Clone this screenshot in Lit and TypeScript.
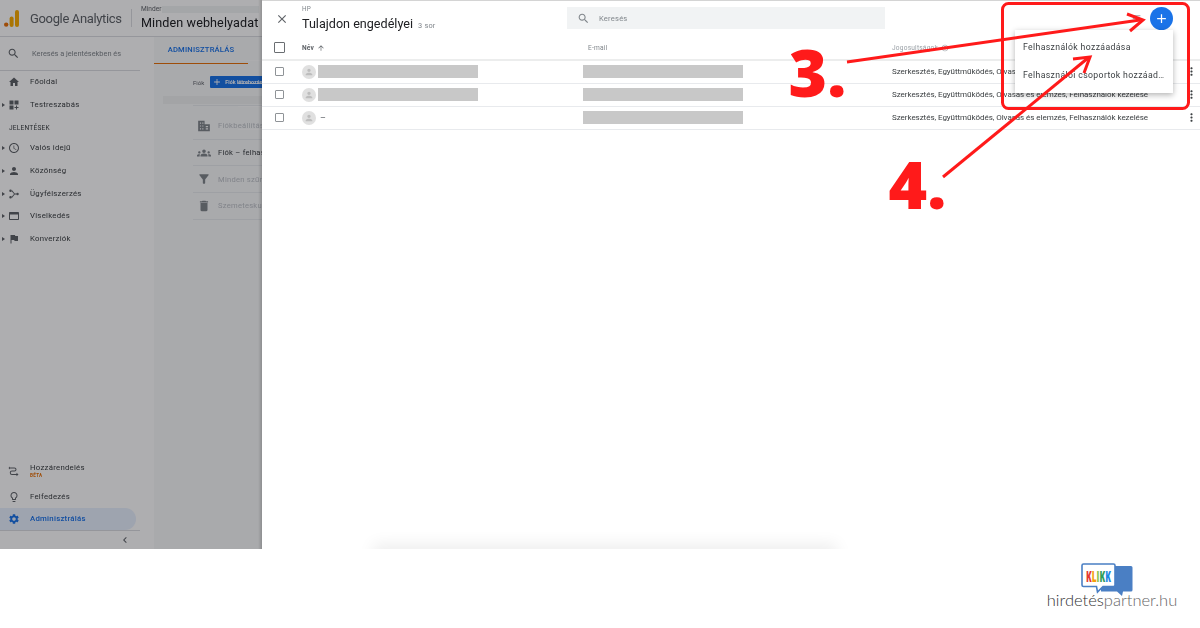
import { LitElement, html, css, svg } from "lit";
import { customElement } from "lit/decorators.js";

const I: Record<string, string> = {
  home: "M10 20v-6h4v6h5v-8h3L12 3 2 12h3v8z",
  dash: "M3 3h8v8H3zm10 0h8v8h-8zM3 13h8v8H3zm15 0h-2v3h-3v2h3v3h2v-3h3v-2h-3z",
  clock: "M12.5 7H11v6l5.25 3.15.75-1.23-4.5-2.67zM11.99 2C6.47 2 2 6.48 2 12s4.47 10 9.99 10C17.52 22 22 17.52 22 12S17.52 2 11.99 2zM12 20c-4.42 0-8-3.58-8-8s3.58-8 8-8 8 3.58 8 8-3.58 8-8 8z",
  person: "M12 12c2.21 0 4-1.79 4-4s-1.79-4-4-4-4 1.79-4 4 1.79 4 4 4zm0 2c-2.67 0-8 1.34-8 4v2h16v-2c0-2.66-5.33-4-8-4z",
  acq: "M5 3a2.5 2.5 0 1 0 0 5 2.5 2.5 0 0 0 0-5zm0 13a2.5 2.5 0 1 0 0 5 2.5 2.5 0 0 0 0-5zm14-6.5a2.5 2.5 0 1 0 0 5 2.5 2.5 0 0 0 0-5zM7 6l1.2-1.4 5.3 6.4H17v2h-3.5l-5.3 6.4L7 18l5-6z",
  web: "M20 4H4c-1.1 0-2 .9-2 2v12c0 1.1.9 2 2 2h16c1.1 0 2-.9 2-2V6c0-1.1-.9-2-2-2zm0 14H4V9h16z",
  flag: "M14.4 6L14 4H5v17h2v-7h5.6l.4 2h7V6z",
  search: "M15.5 14h-.79l-.28-.27C15.41 12.59 16 11.11 16 9.5 16 5.91 13.09 3 9.5 3S3 5.91 3 9.5 5.91 16 9.5 16c1.61 0 3.09-.59 4.23-1.57l.27.28v.79l5 4.99L20.49 19l-4.99-5zm-6 0C7.01 14 5 11.99 5 9.5S7.01 5 9.5 5 14 7.01 14 9.5 11.99 14 9.5 14z",
  gear: "M19.14 12.94c.04-.3.06-.61.06-.94 0-.32-.02-.64-.07-.94l2.03-1.58c.18-.14.23-.41.12-.61l-1.92-3.32c-.12-.22-.37-.29-.59-.22l-2.39.96c-.5-.38-1.03-.7-1.62-.94l-.36-2.54c-.04-.24-.24-.41-.48-.41h-3.84c-.24 0-.43.17-.47.41l-.36 2.54c-.59.24-1.13.57-1.62.94l-2.39-.96c-.22-.08-.47 0-.59.22L2.74 8.87c-.12.21-.08.47.12.61l2.03 1.58c-.05.3-.09.63-.09.94s.02.64.07.94l-2.03 1.58c-.18.14-.23.41-.12.61l1.92 3.32c.12.22.37.29.59.22l2.39-.96c.5.38 1.03.7 1.62.94l.36 2.54c.05.24.24.41.48.41h3.84c.24 0 .44-.17.47-.41l.36-2.54c.59-.24 1.13-.56 1.62-.94l2.39.96c.22.08.47 0 .59-.22l1.92-3.32c.12-.22.07-.47-.12-.61l-2.01-1.58zM12 15.6c-1.98 0-3.6-1.62-3.6-3.6s1.62-3.6 3.6-3.6 3.6 1.62 3.6 3.6-1.62 3.6-3.6 3.6z",
  bulb: "M9 21c0 .55.45 1 1 1h4c.55 0 1-.45 1-1v-1H9v1zm3-19C8.14 2 5 5.14 5 9c0 2.38 1.19 4.47 3 5.74V17c0 .55.45 1 1 1h6c.55 0 1-.45 1-1v-2.26c1.81-1.27 3-3.36 3-5.74 0-3.86-3.14-7-7-7zm2.85 11.1l-.85.6V16h-4v-2.3l-.85-.6C7.8 12.16 7 10.63 7 9c0-2.76 2.24-5 5-5s5 2.24 5 5c0 1.63-.8 3.16-2.15 4.1z",
  attr: "M4 3h9a4 4 0 0 1 0 8H8a2.5 2.5 0 0 0 0 5h9v-2.5l4 3.5-4 3.5V18H8a4.5 4.5 0 0 1 0-9h5a2 2 0 0 0 0-4H4v2L1 4l3-3z",
  trash: "M6 19c0 1.1.9 2 2 2h8c1.1 0 2-.9 2-2V7H6v12zM19 4h-3.5l-1-1h-5l-1 1H5v2h14V4z",
  filter: "M4.25 5.61C6.27 8.2 10 13 10 13v6c0 .55.45 1 1 1h2c.55 0 1-.45 1-1v-6s3.72-4.8 5.74-7.39c.51-.66.04-1.61-.79-1.61H5.04c-.83 0-1.3.95-.79 1.61z",
  biz: "M2 3h11v6h9v12H2zM5 6v2h2V6zm4 0v2h2V6zM5 11v2h2v-2zm4 0v2h2v-2zM5 16v2h2v-2zm4 0v2h2v-2zM15 12v2h4v-2zm0 4v2h4v-2z",
  group: "M12 12.75c1.63 0 3.07.39 4.24.9 1.08.48 1.76 1.56 1.76 2.73V18H6v-1.61c0-1.18.68-2.26 1.76-2.73 1.17-.52 2.61-.91 4.24-.91zM4 13c1.1 0 2-.9 2-2s-.9-2-2-2-2 .9-2 2 .9 2 2 2zm1.13 1.1c-.37-.06-.74-.1-1.13-.1-.99 0-1.93.21-2.78.58C.48 14.9 0 15.62 0 16.43V18h4.5v-1.61c0-.83.23-1.61.63-2.29zM20 13c1.1 0 2-.9 2-2s-.9-2-2-2-2 .9-2 2 .9 2 2 2zm4 3.43c0-.81-.48-1.53-1.22-1.85-.85-.37-1.79-.58-2.78-.58-.39 0-.76.04-1.13.1.4.68.63 1.46.63 2.29V18H24v-1.57zM12 6c1.66 0 3 1.34 3 3s-1.34 3-3 3-3-1.34-3-3 1.34-3 3-3z",
  close: "M19 6.41L17.59 5 12 10.59 6.41 5 5 6.41 10.59 12 5 17.59 6.41 19 12 13.41 17.59 19 19 17.59 13.41 12z",
  add: "M19 13h-6v6h-2v-6H5v-2h6V5h2v6h6z",
  up: "M4 12l1.41 1.41L11 7.83V20h2V7.83l5.58 5.59L20 12l-8-8-8 8z",
  more: "M12 8c1.1 0 2-.9 2-2s-.9-2-2-2-2 .9-2 2 .9 2 2 2zm0 2c-1.1 0-2 .9-2 2s.9 2 2 2 2-.9 2-2-.9-2-2-2zm0 6c-1.1 0-2 .9-2 2s.9 2 2 2 2-.9 2-2-.9-2-2-2z",
  help: "M11 18h2v-2h-2v2zm1-16C6.48 2 2 6.48 2 12s4.48 10 10 10 10-4.48 10-10S17.52 2 12 2zm0 18c-4.41 0-8-3.59-8-8s3.59-8 8-8 8 3.59 8 8-3.59 8-8 8zm0-14c-2.21 0-4 1.79-4 4h2c0-1.1.9-2 2-2s2 .9 2 2c0 2-3 1.75-3 5h2c0-2.25 3-2.5 3-5 0-2.21-1.79-4-4-4z",
  chev: "M15.41 7.41L14 6l-6 6 6 6 1.41-1.41L10.83 12z",
  filt2: "M3 6h18v2H3zm4 5h10v2H7zm3 5h4v2h-4z",
};
const ic = (n: string, s: number, c = "#5f6368") =>
  html`<svg class="i" width=${s} height=${s} viewBox="0 0 24 24" fill=${c} fill-rule="evenodd">${svg`<path d=${I[n]}></path>`}</svg>`;

const navTop = [
  ["home", "Főoldal", false],
  ["dash", "Testreszabás", true],
];
const navRep = [
  ["clock", "Valós idejű"],
  ["person", "Közönség"],
  ["acq", "Ügyfélszerzés"],
  ["web", "Viselkedés"],
  ["flag", "Konverziók"],
];
const adminRows = [
  ["biz", "Fiókbeállítások", true],
  ["group", "Fiók – felhasználók", false],
  ["filter", "Minden szűrő", true],
  ["trash", "Szemeteskuka", true],
];
const PERM = "Szerkesztés, Együttműködés, Olvasás és elemzés, Felhasználók kezelése";

@customElement("app-root")
export class AppRoot extends LitElement {
  static styles = css`
    :host { display: block; width: 1200px; height: 628px; position: relative; overflow: hidden; background: #fff; font-family: Roboto, "Liberation Sans", sans-serif; color: #3c4043; }
    .i { display: block; flex: none; }
    .stage { display: grid; grid-template-columns: 262px 1fr; height: 549px; filter: blur(0.45px); }
    .ga { position: relative; display: flex; flex-direction: column; height: 549px; overflow: hidden; background: #fff; }
    .scrim { position: absolute; inset: 0; background: rgba(2, 4, 8, 0.32); }
    .edge { position: absolute; top: 0; right: 0; bottom: 0; width: 4px; background: linear-gradient(90deg, transparent, rgba(0,0,0,.16)); }
    .ghost { position: absolute; left: 238px; top: 60px; width: 24px; height: 70px; background: repeating-linear-gradient(180deg, #fff 0 1px, transparent 1px 23px); opacity: .6; }
    .gahead { height: 37px; flex: none; display: flex; align-items: center; border-bottom: 1px solid #dadce0; box-sizing: border-box; white-space: nowrap; }
    .logo { width: 15px; height: 17px; margin-left: 4px; flex: none; }
    .gaName { font-size: 13px; letter-spacing: -.35px; color: #5f6368; margin-left: 11px; width: 101px; flex: none; }
    .gaDiv { width: 1px; height: 18px; background: #dadce0; flex: none; }
    .scope { margin-left: 9px; line-height: 1; flex: 1; min-width: 0; }
    .scope small { display: flex; align-items: center; gap: 1px; font-size: 6.6px; color: #5f6368; margin-bottom: 4px; height: 7px; }
    .scope small i { flex: 1; height: 7px; background: #f1f3f4; margin-right: 3px; }
    .scope b { display: block; font-weight: 400; font-size: 12.6px; color: #202124; letter-spacing: .1px; white-space: nowrap; }
    .gabody { display: grid; grid-template-columns: 154px 1fr; flex: 1; min-height: 0; }
    .nav { display: flex; flex-direction: column; min-width: 0; }
    .search { height: 34px; width: 140px; flex: none; box-sizing: border-box; border-bottom: 1px solid #dadce0; display: flex; align-items: center; padding-left: 7px; gap: 12px; font-size: 7.4px; color: #80868b; white-space: nowrap; overflow: hidden; }
    .row { height: 22.67px; flex: none; display: grid; grid-template-columns: 8px 14px 1fr; align-items: center; font-size: 7.8px; letter-spacing: .25px; color: #3c4043; width: 136px; box-sizing: border-box; }
    .row .t { padding-left: 8px; white-space: nowrap; line-height: 1; }
    .caret { width: 0; height: 0; border-left: 3px solid #5f6368; border-top: 2.5px solid transparent; border-bottom: 2.5px solid transparent; margin-left: 2px; }
    .sec { height: 20.67px; flex: none; display: flex; align-items: center; padding: 3px 0 0 9px; box-sizing: border-box; font-size: 6.6px; letter-spacing: .2px; color: #3c4043; }
    .grow { flex: 1; }
    .beta { display: block; font-size: 4.6px; line-height: 5px; font-weight: 700; color: #e8710a; letter-spacing: .3px; margin-top: 1px; }
    .row.hoz { height: 27px; }
    .row.hoz .t { transform: translateY(-1px); }
    .row.active { color: #1a73e8; background: #e8f0fe; border-radius: 0 11px 11px 0; font-weight: 500; height: 22px; }
    .foot { height: 19px; width: 140px; flex: none; border-top: 1px solid #dadce0; box-sizing: border-box; display: flex; justify-content: flex-end; align-items: center; padding-right: 9px; }
    .content { background: #f8f9fa; min-width: 0; overflow: hidden; white-space: nowrap; }
    .tab { width: 94px; height: 27px; box-sizing: border-box; border-bottom: 1.5px solid #e8710a; text-align: center; font-size: 7.6px; line-height: 26px; letter-spacing: .2px; color: #1a73e8; font-weight: 500; }
    .acct { display: flex; align-items: center; margin-top: 12px; padding-left: 39px; font-size: 6px; color: #5f6368; gap: 6px; height: 12px; }
    .btn { display: flex; align-items: center; background: #1a73e8; color: #fff; height: 12px; border-radius: 1px; font-size: 5.4px; font-weight: 700; padding-left: 2px; gap: 3px; flex: none; width: 80px; }
    .gbar { height: 8px; margin: 8px 0 0 9px; background: #eff0f1; }
    .admin { margin: 1px 0 0 39px; padding-top: 7px; border-top: 1px solid #e8eaed; }
    .admin div { height: 26.7px; box-sizing: border-box; display: flex; align-items: center; gap: 7px; border-bottom: 1px solid #e8eaed; font-size: 7.6px; letter-spacing: .25px; padding-left: 4px; }
    .admin .off { color: #bdc1c6; }
    .admin .on { color: #3c4043; }
    .panel { position: relative; background: #fff; border-top: 1px solid #d4d4d4; box-sizing: border-box; overflow: hidden; min-width: 0; }
    .phead { height: 37px; padding-bottom: 1px; box-sizing: border-box; display: grid; grid-template-columns: 40px 265px 318px 1fr; align-items: center; }
    .x { display: flex; justify-content: center; }
    .ptitle small { display: block; font-size: 6.4px; line-height: 8px; color: #80868b; letter-spacing: .3px; margin-top: -1px; }
    .ptitle span { font-size: 12.6px; color: #202124; line-height: 16px; }
    .ptitle em { font-style: normal; font-size: 7.4px; color: #80868b; margin-left: 5px; letter-spacing: .2px; }
    .psearch { height: 22px; background: #f1f3f4; display: flex; align-items: center; padding-left: 10px; gap: 9px; font-size: 7.6px; letter-spacing: .2px; color: #80868b; margin-top: -2px; }
    .pacts { display: flex; justify-content: flex-end; align-items: center; gap: 8px; padding-right: 27.5px; margin-top: -2px; }
    .fab { width: 23px; height: 23px; border-radius: 50%; background: #1a73e8; display: flex; align-items: center; justify-content: center; }
    .thead, .tr { display: grid; grid-template-columns: 40px 281px 309px 1fr 21px; align-items: center; box-sizing: border-box; }
    .thead { height: 23px; padding-bottom: 2px; border-bottom: 2px solid #eceded; font-size: 6.6px; color: #5f6368; letter-spacing: .2px; }
    .thead .nm { font-weight: 700; display: flex; align-items: center; gap: 3px; }
    .thead .pm { display: flex; align-items: center; gap: 3px; color: #9aa0a6; }
    .thead .em { color: #80868b; padding-left: 5px; }
    .tr { height: 23px; padding-bottom: 1px; border-bottom: 1px solid #e8eaed; font-size: 8px; letter-spacing: -.04px; color: #3c4043; white-space: nowrap; }
    .cb { width: 9px; height: 9px; border: 1px solid #8f9397; border-radius: 1px; margin-left: 13px; box-sizing: border-box; }
    .thead .cb { width: 11px; height: 11px; margin-left: 12px; border-color: #6a6e72; }
    .nc { display: flex; align-items: center; gap: 2px; }
    .av { width: 14px; height: 14px; border-radius: 50%; background: #e0e0e0; display: flex; align-items: center; justify-content: center; flex: none; }
    .red { height: 13px; background: #c8c8c8; display: block; width: 160px; }
    .dash { font-size: 9px; margin-left: 2px; color: #5f6368; }
    .ke { display: flex; justify-content: center; padding-left: 3px; }
    .glow { position: absolute; left: 118px; bottom: -12px; width: 450px; height: 10px; box-shadow: 0 0 16px 7px rgba(0, 0, 0, 0.07); background: rgba(0,0,0,.07); }
    .menu { position: absolute; left: 753px; top: 29px; width: 158px; height: 63px; background: #fff; box-shadow: 0 2px 6px rgba(0, 0, 0, 0.3); padding: 3px 0 0 8px; box-sizing: border-box; font-size: 8.7px; letter-spacing: .36px; line-height: 28px; color: #3c4043; white-space: nowrap; }
    .menu span { display: block; width: 142px; overflow: hidden; text-overflow: ellipsis; }
    .bottom { height: 79px; display: flex; justify-content: flex-end; padding-right: 24px; box-sizing: border-box; }
    .brand { width: 128px; display: flex; flex-direction: column; align-items: center; padding-top: 14px; box-sizing: border-box; }
    .brand svg { display: block; margin-left: -10px; flex: none; }
    .brand p { margin: -5px 0 0; font: 300 16.5px Lato, "Open Sans", sans-serif; color: #333; white-space: nowrap; line-height: 18px; }
    .brand p span { color: #666; }
    .ann { position: absolute; left: 0; top: 0; pointer-events: none; }
    .num { font-family: "Open Sans", "Liberation Sans", sans-serif; font-weight: 800; font-size: 66px; fill: #ff1a1a; }
  `;

  render() {
    return html`
      <div class="stage">
        <section class="ga">
          <div class="gahead">
            <svg class="logo" viewBox="0 0 15 17">
              <circle cx="2.2" cy="14.6" r="2.2" fill="#e8710a"></circle>
              <rect x="5.6" y="6.6" width="4" height="10.4" rx="2" fill="#f9ab00"></rect>
              <rect x="11" y="0" width="4" height="17" rx="2" fill="#f9ab00"></rect>
            </svg>
            <span class="gaName">Google Analytics</span>
            <span class="gaDiv"></span>
            <div class="scope"><small>Minder<i></i></small><b>Minden webhelyadat</b></div>
          </div>
          <div class="gabody">
            <nav class="nav">
              <div class="search">${ic("search", 13)}<span>Keresés a jelentésekben és</span></div>
              ${navTop.map(([i, t, c]) => html`<div class="row"><span>${c ? html`<div class="caret"></div>` : ""}</span>${ic(i as string, 12)}<span class="t">${t}</span></div>`)}
              <div class="sec">JELENTÉSEK</div>
              ${navRep.map(([i, t]) => html`<div class="row"><span><div class="caret"></div></span>${ic(i, 12)}<span class="t">${t}</span></div>`)}
              <div class="grow"></div>
              <div class="row hoz"><span></span>${ic("attr", 12)}<span class="t">Hozzárendelés<span class="beta">BÉTA</span></span></div>
              <div class="row"><span></span>${ic("bulb", 12)}<span class="t">Felfedezés</span></div>
              <div class="row active"><span></span>${ic("gear", 12, "#1a73e8")}<span class="t">Adminisztrálás</span></div>
              <div class="foot">${ic("chev", 12)}</div>
            </nav>
            <div class="content">
              <div class="tab">ADMINISZTRÁLÁS</div>
              <div class="acct">Fiók<span class="btn">${ic("add", 10, "#fff")}Fiók létrehozása</span></div>
              <div class="gbar"></div>
              <div class="admin">
                ${adminRows.map(([i, t, off]) => html`<div class=${off ? "off" : "on"}>${ic(i as string, 14, "#80868b")}<span>${t}</span></div>`)}
              </div>
            </div>
          </div>
          <div class="ghost"></div>
          <div class="scrim"></div>
          <div class="edge"></div>
        </section>
        <section class="panel">
          <div class="phead">
            <div class="x">${ic("close", 14, "#5f6368")}</div>
            <div class="ptitle"><small>HP</small><span>Tulajdon engedélyei</span><em>3 sor</em></div>
            <div class="psearch">${ic("search", 13, "#80868b")}<span>Keresés</span></div>
            <div class="pacts">${ic("filt2", 13, "#9aa0a6")}<span class="fab">${ic("add", 15, "#fff")}</span></div>
          </div>
          <div class="thead">
            <span class="cb"></span>
            <span class="nm">Név ${ic("up", 8, "#5f6368")}</span>
            <span class="em">E-mail</span>
            <span class="pm">Jogosultságok ${ic("help", 8, "#9aa0a6")}</span>
            <span></span>
          </div>
          ${[0, 1, 2].map((i) => html`
            <div class="tr">
              <span class="cb"></span>
              <span class="nc"><span class="av">${ic("person", 10, "#bdbdbd")}</span>${i < 2 ? html`<span class="red"></span>` : html`<span class="dash">–</span>`}</span>
              <span class="red"></span>
              <span>${PERM}</span>
              <span class="ke">${ic("more", 13, "#3c4043")}</span>
            </div>`)}
          <div class="glow"></div>
          <div class="menu"><span>Felhasználók hozzáadása</span><span>Felhasználói csoportok hozzáadása</span></div>
        </section>
      </div>
      <footer class="bottom">
        <div class="brand">
          <svg width="52" height="33" viewBox="0 0 52 33">
            <path d="M20 3h30a1.5 1.5 0 0 1 1.5 1.5V27a1.5 1.5 0 0 1-1.5 1.5h-8l-1 4.5-5-4.5H20z" fill="#4a7fc4"></path>
            <path d="M2.5 1h30a1.5 1.5 0 0 1 1.5 1.5V22a1.5 1.5 0 0 1-1.5 1.5H22L16.5 29l-1-5.5H2.5A1.5 1.5 0 0 1 1 22V2.5A1.5 1.5 0 0 1 2.5 1z" fill="#fff" stroke="#4a7fc4" stroke-width="1.6"></path>
            <text transform="translate(5 18.5) scale(.52 1)" font-family="Open Sans, sans-serif" font-weight="800" font-size="16"><tspan fill="#e53935">K</tspan><tspan fill="#f59e0b">L</tspan><tspan fill="#8bc34a">I</tspan><tspan fill="#2e9e5b">K</tspan><tspan fill="#1e88e5">K</tspan></text>
          </svg>
          <p>hirdetés<span>partner.hu</span></p>
        </div>
      </footer>
      <svg class="ann" width="1200" height="628" viewBox="0 0 1200 628" fill="none">
        <rect x="1002.5" y="3.5" width="186" height="105" rx="6" stroke="#ff1a1a" stroke-width="3"></rect>
        <path d="M847 62L1140 20" stroke="#ff1a1a" stroke-width="3"></path>
        <path d="M1127 14L1143 20L1130 31" stroke="#ff1a1a" stroke-width="3"></path>
        <path d="M943 177L1088 58" stroke="#ff1a1a" stroke-width="3"></path>
        <path d="M1073 59L1090 57L1084 73" stroke="#ff1a1a" stroke-width="3"></path>
        <text class="num" x="788.5" y="97">3.</text>
        <text class="num" x="888.5" y="209">4.</text>
      </svg>
    `;
  }
}
